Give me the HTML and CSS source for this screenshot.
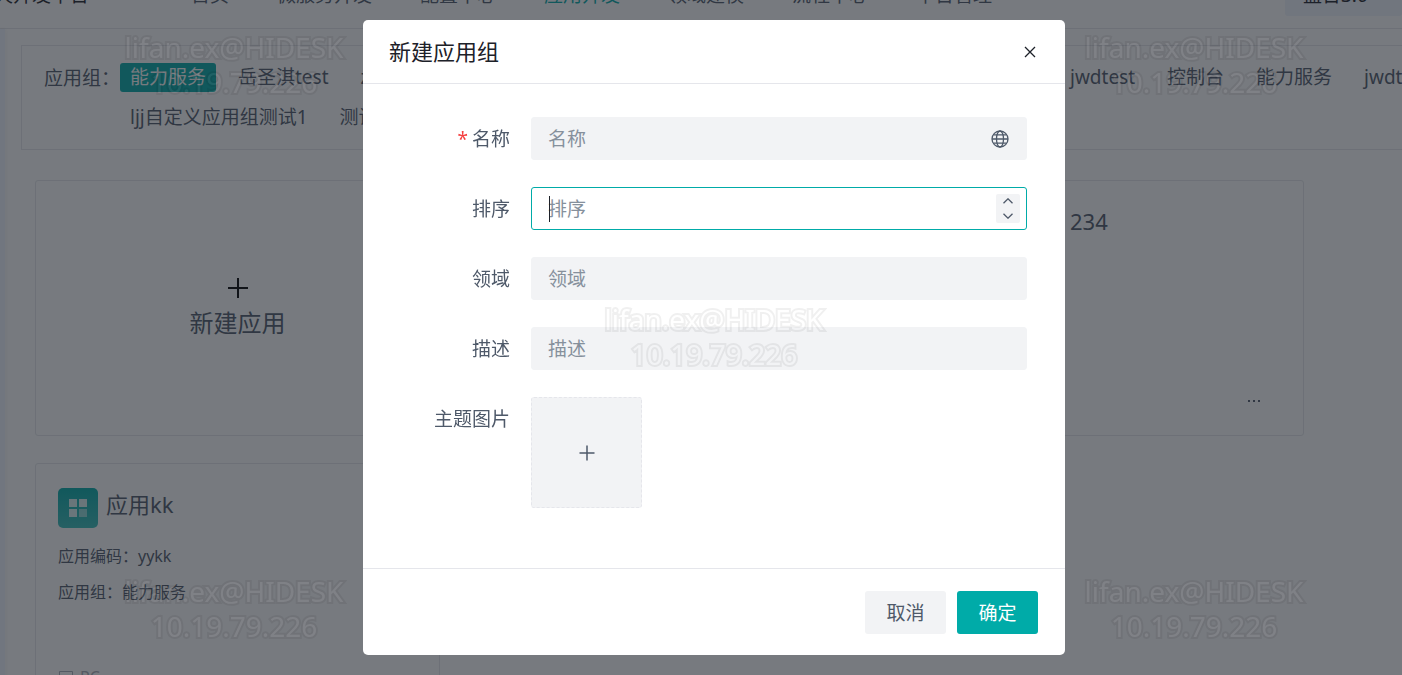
FILE: index.html
```html
<!DOCTYPE html>
<html lang="zh-CN">
<head>
<meta charset="utf-8">
<title>新建应用组</title>
<link rel="stylesheet" href="styles.css">
</head>
<body>
<div class="page">
  <header class="topbar">
    <div class="brand">天开发平台</div>
    <nav class="nav">
      <a href="#">首页</a>
      <a href="#">微服务开发</a>
      <a href="#">配置中心</a>
      <a href="#" class="active">应用开发</a>
      <a href="#">领域建模</a>
      <a href="#">流程中心</a>
      <a href="#">平台管理</a>
    </nav>
    <div class="tenant">蓝台3.0</div>
  </header>
  <div class="shell">
    <aside class="side"></aside>
    <main class="main">
      <section class="filter">
        <div class="filter-label">应用组：</div>
        <div class="filter-left">
          <div class="filter-row">
            <a href="#" class="tag selected">能力服务</a>
            <a href="#" class="tag">岳圣淇test</a>
            <a href="#" class="tag">z</a>
          </div>
          <div class="filter-row">
            <a href="#" class="tag">ljj自定义应用组测试1</a>
            <a href="#" class="tag">测试</a>
          </div>
        </div>
        <div class="filter-row">
          <a href="#" class="tag">jwdtest</a>
          <a href="#" class="tag">控制台</a>
          <a href="#" class="tag">能力服务</a>
          <a href="#" class="tag">jwdtest</a>
        </div>
      </section>
      <section class="cards">
        <a href="#" class="card card-new">
          <svg width="20" height="20" viewBox="0 0 20 20" fill="none" stroke="#000" stroke-width="2"><path d="M10 0v20M0 10h20"/></svg>
          <span>新建应用</span>
        </a>
        <div class="card"></div>
        <article class="card">
          <div class="card-head card-head-end"><h2>234</h2></div>
          <button class="more" aria-label="more">
            <svg width="14" height="4" viewBox="0 0 14 4" fill="#4e5969"><path d="M1 1h2v2H1zM6 1h2v2H6zM11 1h2v2h-2z"/></svg>
          </button>
        </article>
        <article class="card">
          <div class="card-head">
            <svg class="app-icon" width="40" height="40" viewBox="0 0 40 40">
              <defs><linearGradient id="g" x1="0" y1="0" x2="0" y2="1"><stop offset="0" stop-color="#00aba8"/><stop offset="1" stop-color="#36bdb9"/></linearGradient></defs>
              <rect width="40" height="40" rx="5" fill="url(#g)"/>
              <path d="M11 11h8v8h-8zM21 11h8v8h-8zM11 21h8v8h-8z" fill="#fff" opacity=".85"/>
              <path d="M21 21h8v8h-8z" fill="#fff" opacity=".5"/>
            </svg>
            <h2>应用kk</h2>
          </div>
          <p>应用编码：yykk</p>
          <p>应用组：能力服务</p>
          <div class="platform">
            <svg width="16" height="14" viewBox="0 0 16 14" fill="none" stroke="#a9aeb8"><path d="M1.5 1.5h13v9h-13zM5 13h6"/></svg>
            <span>PC</span>
          </div>
        </article>
      </section>
    </main>
  </div>
</div>

<div class="mask">
  <form class="modal" role="dialog" aria-labelledby="modal-title">
    <div class="modal-head">
      <h1 id="modal-title">新建应用组</h1>
      <button type="button" class="close" aria-label="close">
        <svg width="12" height="12" viewBox="0 0 12 12" fill="none" stroke="#1d2129" stroke-width="1.3"><path d="M1 1l10 10M11 1L1 11"/></svg>
      </button>
    </div>
    <div class="modal-body">
      <label for="name"><span class="required">*</span>名称</label>
      <div class="field">
        <input id="name" type="text" placeholder="名称">
        <svg class="globe" width="18" height="18" viewBox="0 0 18 18" fill="none" stroke="#4e5969" stroke-width="1.3"><circle cx="9" cy="9" r="8"/><ellipse cx="9" cy="9" rx="3.5" ry="8"/><path d="M1 9h16M2.5 4.8h13M2.5 13.2h13"/></svg>
      </div>
      <label for="sort">排序</label>
      <div class="field focused">
        <input id="sort" type="number" placeholder="排序">
        <span class="caret"></span>
        <span class="stepper">
          <button type="button" aria-label="up"><svg width="10" height="6" viewBox="0 0 10 6" fill="none" stroke="#4e5969" stroke-width="1.3"><path d="M.5 5.3L5 .8l4.500 4.500"/></svg></button>
          <button type="button" aria-label="down"><svg width="10" height="6" viewBox="0 0 10 6" fill="none" stroke="#4e5969" stroke-width="1.3"><path d="M.5 .7L5 5.200l4.500-4.500"/></svg></button>
        </span>
      </div>
      <label for="domain">领域</label>
      <div class="field"><input id="domain" type="text" placeholder="领域"></div>
      <label for="desc">描述</label>
      <div class="field"><input id="desc" type="text" placeholder="描述"></div>
      <label for="upload">主题图片</label>
      <button type="button" id="upload" class="upload">
        <svg width="16" height="16" viewBox="0 0 16 16" fill="none" stroke="#4e5969" stroke-width="1.500"><path d="M8 .5v15M.5 8h15"/></svg>
      </button>
    </div>
    <div class="modal-foot">
      <button type="button" class="btn">取消</button>
      <button type="submit" class="btn primary">确定</button>
    </div>
  </form>
</div>

<div class="watermarks" aria-hidden="true">
  <div class="mark left top">lifan.ex@HIDESK<br>10.19.79.226</div>
  <div class="mark right top">lifan.ex@HIDESK<br>10.19.79.226</div>
  <div class="mark center middle">lifan.ex@HIDESK<br>10.19.79.226</div>
  <div class="mark left bottom">lifan.ex@HIDESK<br>10.19.79.226</div>
  <div class="mark right bottom">lifan.ex@HIDESK<br>10.19.79.226</div>
</div>
</body>
</html>
```

FILE: styles.css
```css
* { box-sizing: border-box; }
body {
  margin: 0;
  height: 100vh;
  overflow: hidden;
  font-family: "Noto Sans", "Noto Sans CJK SC", sans-serif;
  font-weight: 400;
  font-size: 19px;
  line-height: 28px;
  color: #4e5969;
  background: #fff;
}
a { color: inherit; text-decoration: none; }
h1, h2, p { margin: 0; font-weight: inherit; }
button { padding: 0; border: 0; background: none; font: inherit; color: inherit; }
svg { display: block; }

/* Page behind the dialog, scrolled past the upper part of the top bar */
.page { height: 100vh; overflow: hidden; }
.topbar {
  display: flex;
  align-items: center;
  height: 67px;
  margin-top: -38px;
  border-bottom: 1px solid #e5e6eb;
  white-space: nowrap;
}
.brand {
  width: 191px;
  margin-left: -6px;
  margin-right: 6px;
  color: #1d2129;
}
.nav { display: flex; gap: 48px; flex: 1; }
.nav .active { color: #00aba8; }
.tenant {
  width: 117px;
  padding: 7px 18px;
  border-radius: 3px;
  background: #f0f4fc;
  color: #1d2129;
}
.shell { display: flex; height: 100%; }
.side { width: 5px; background: #f0f5ff; box-shadow: 0 0 5px rgba(0, 0, 0, .06); }
.main { flex: 1; min-width: 0; padding: 16px 0 0 16px; }

.filter {
  display: flex;
  height: 105px;
  padding: 17px 0 0 22px;
  border: 1px solid #e5e6eb;
  border-right: 0;
  overflow: hidden;
  white-space: nowrap;
}
.filter-label { width: 76px; line-height: 30px; }
.filter-left { flex: 0 0 940px; }
.filter-row { display: flex; gap: 12px; margin-bottom: 11px; }
.tag { padding: 0 10px; border-radius: 3px; line-height: 29px; }
.tag.selected { background: #00aba8; color: #fff; }

.cards {
  display: grid;
  grid-template-columns: repeat(3, 405px);
  grid-auto-rows: 256px;
  gap: 27px;
  padding: 30px 0 0 14px;
}
.card {
  display: flex;
  flex-direction: column;
  padding: 24px 22px;
  border: 1px solid #e5e6eb;
  border-radius: 3px;
}
.card-new {
  align-items: center;
  justify-content: center;
  gap: 10px;
  font-size: 24px;
  line-height: 30px;
}
.card-head { display: flex; gap: 8px; height: 40px; margin-bottom: 10px; }
.card-head-end { padding-left: 148px; }
.card h2 { font-size: 22px; line-height: 32px; }
.card p { font-size: 16px; line-height: 36px; }
.more { align-self: flex-end; margin: auto 20px 8px; }
.platform { display: flex; align-items: center; gap: 6px; margin-top: 53px; font-size: 16px; color: #a9aeb8; }

/* Dialog */
.mask {
  position: fixed;
  inset: 0;
  display: flex;
  align-items: center;
  justify-content: center;
  padding-left: 26px;
  background: rgba(29, 33, 41, .6);
}
.modal { width: 702px; border-radius: 5px; background: #fff; }
.modal-head {
  display: flex;
  align-items: center;
  justify-content: space-between;
  height: 64px;
  padding: 0 29px 0 26px;
  border-bottom: 1px solid #e5e6eb;
  color: #1d2129;
}
.modal-head h1 { font-size: 22px; line-height: 28px; padding-bottom: 2px; }
.modal-body {
  display: grid;
  grid-template-columns: 147px 1fr;
  gap: 27px 21px;
  padding: 33px 38px 60px 0;
}
.modal-body label { text-align: right; line-height: 45px; height: 43px; }
.required { margin-right: 4px; color: #f53f3f; }
.field {
  position: relative;
  display: flex;
  align-items: center;
  height: 43px;
  padding: 0 6px 0 16px;
  border: 1px solid #f2f3f5;
  border-radius: 3px;
  background: #f2f3f5;
}
.field.focused { border-color: #00aba8; background: #fff; }
.field input {
  flex: 1;
  min-width: 0;
  padding: 0;
  border: 0;
  outline: 0;
  background: none;
  font: inherit;
  color: #1d2129;
  appearance: textfield;
}
.field input::placeholder { color: #86909c; opacity: 1; }
.globe { margin-right: 11px; }
.caret { position: absolute; left: 17px; top: 8px; width: 1px; height: 26px; background: #1d2129; }
.stepper { display: flex; flex-direction: column; width: 24px; height: 29px; border-radius: 2px; background: #f2f3f5; }
.stepper button { display: flex; flex: 1; align-items: center; justify-content: center; }
.upload {
  display: flex;
  align-items: center;
  justify-content: center;
  width: 111px;
  height: 111px;
  border: 1px dashed #e5e6eb;
  border-radius: 3px;
  background: #f2f3f5;
}
.modal-foot {
  display: flex;
  justify-content: flex-end;
  gap: 11px;
  padding: 22px 27px 21px;
  border-top: 1px solid #e5e6eb;
}
.btn { width: 81px; height: 43px; border-radius: 3px; background: #f2f3f5; }
.btn.primary { background: #00aba8; color: #fff; }

/* Watermark overlay */
.watermarks { position: fixed; inset: 0; overflow: hidden; pointer-events: none; }
.mark {
  position: absolute;
  width: 240px;
  text-align: center;
  font: 400 28px/35px "Noto Sans", "DejaVu Sans", sans-serif;
  color: #fff;
  -webkit-text-stroke: 4px #000;
  paint-order: stroke fill;
  opacity: .06;
}
.left { left: 114px; }
.center { left: 594px; }
.right { left: 1074px; }
.top { top: 30px; }
.middle { top: 302px; }
.bottom { top: 574px; }
```
